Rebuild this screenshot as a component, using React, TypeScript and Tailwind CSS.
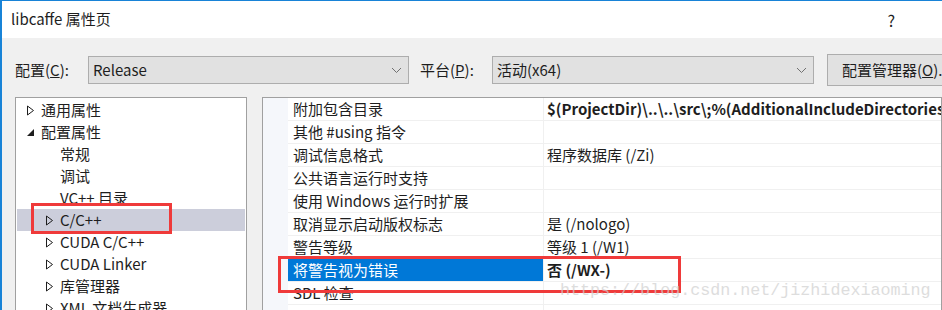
import React from "react"

const font = { fontFamily: '"Noto Sans CJK SC", "Noto Sans", sans-serif' }

type TreeItem = { label: string; level: number; icon?: "open" | "closed"; selected?: boolean }

const tree: TreeItem[] = [
    { label: "通用属性", level: 0, icon: "closed" },
    { label: "配置属性", level: 0, icon: "open" },
    { label: "常规", level: 1 },
    { label: "调试", level: 1 },
    { label: "VC++ 目录", level: 1 },
    { label: "C/C++", level: 1, icon: "closed", selected: true },
    { label: "CUDA C/C++", level: 1, icon: "closed" },
    { label: "CUDA Linker", level: 1, icon: "closed" },
    { label: "库管理器", level: 1, icon: "closed" },
    { label: "XML 文档生成器", level: 1, icon: "closed" },
]

type Prop = { name: string; value?: string; bold?: boolean; selected?: boolean }

const props: Prop[] = [
    { name: "附加包含目录", value: "$(ProjectDir)\\..\\..\\src\\;%(AdditionalIncludeDirectories)", bold: true },
    { name: "其他 #using 指令" },
    { name: "调试信息格式", value: "程序数据库 (/Zi)" },
    { name: "公共语言运行时支持" },
    { name: "使用 Windows 运行时扩展" },
    { name: "取消显示启动版权标志", value: "是 (/nologo)" },
    { name: "警告等级", value: "等级 1 (/W1)" },
    { name: "将警告视为错误", value: "否 (/WX-)", bold: true, selected: true },
    { name: "SDL 检查" },
    { name: "" },
]

function Chevron() {
    return (
        <svg width="11" height="7" viewBox="0 0 11 7" className="shrink-0">
            <path d="M1 1 L5.5 5.5 L10 1" fill="none" stroke="#707070" strokeWidth="1" />
        </svg>
    )
}

function Arrow({ kind }: { kind: "open" | "closed" }) {
    if (kind === "open") {
        return (
            <svg width="9" height="9" viewBox="0 0 9 9">
                <path d="M8 1 L8 8 L1 8 Z" fill="#1e1e1e" />
            </svg>
        )
    }
    return (
        <svg width="9" height="11" viewBox="0 0 9 11">
            <path d="M1.5 1 L7.5 5.5 L1.5 10 Z" fill="none" stroke="#1e1e1e" strokeWidth="1" />
        </svg>
    )
}

function Select({ value, width }: { value: string; width: string }) {
    return (
        <div className={`${width} shrink-0 h-[28px] flex items-center justify-between border border-[#adadad] bg-[#e1e1e1] pl-[4px] pr-[6px] text-[15px] text-[#1e1e1e]`}>
            <span>{value}</span>
            <Chevron />
        </div>
    )
}

export default function App() {
    return (
        <div className="relative w-[942px] h-[310px] overflow-hidden border-t border-l-2 border-[#1883d7] bg-[#f0f0f0] text-[#1e1e1e]" style={font}>
            <div className="h-[37px] bg-white flex items-center justify-between pl-[9px] pr-[47px] text-[15px]">
                <span>libcaffe 属性页</span>
                <span className="text-[16px]">?</span>
            </div>

            <div className="flex items-center mt-[16px] pl-[13px] text-[15px] whitespace-nowrap">
                <span className="w-[73px] shrink-0">
                    配置(<span className="underline">C</span>):
                </span>
                <Select value="Release" width="w-[321px]" />
                <span className="ml-[11px] w-[72px] shrink-0">
                    平台(<span className="underline">P</span>):
                </span>
                <Select value="活动(x64)" width="w-[322px]" />
                <div className="ml-[13px] h-[32px] w-[140px] shrink-0 flex items-center border border-[#adadad] bg-[#e1e1e1] pl-[14px]">
                    配置管理器(<span className="underline">O</span>)...
                </div>
            </div>

            <div className="flex mt-[11px] pl-[13px] gap-[15px]">
                <div className="w-[232px] h-[220px] shrink-0 border border-[#a0a0a0] bg-white pt-[1px] px-[1px]">
                    {tree.map((t) => (
                        <div
                            key={t.label}
                            className={`h-[22px] flex items-center text-[15px] ${t.selected ? "bg-[#cccedb]" : ""}`}
                            style={{ paddingLeft: t.level === 0 ? 9 : 28 }}
                        >
                            <span className="w-[15px] flex items-center">{t.icon && <Arrow kind={t.icon} />}</span>
                            <span>{t.label}</span>
                        </div>
                    ))}
                </div>

                <div className="flex-1 h-[220px] border border-[#a0a0a0] bg-white flex overflow-hidden">
                    <div className="w-[25px] shrink-0 bg-[#f5f7fb]" />
                    <div className="flex-1">
                        {props.map((p, i) => (
                            <div key={i} className="h-[23px] flex border-b border-[#f0f0f0] text-[15px] whitespace-nowrap">
                                <div
                                    className={`w-[256px] shrink-0 pl-[5px] flex items-center border-r border-[#f0f0f0] ${p.selected ? "bg-[#0078d7] text-white" : ""}`}
                                >
                                    {p.name}
                                </div>
                                <div className={`flex-1 pl-[3px] flex items-center overflow-hidden ${p.bold ? "font-bold" : ""}`}>
                                    {p.value}
                                </div>
                            </div>
                        ))}
                    </div>
                </div>
            </div>

            <div className="absolute left-[29px] top-[202px] w-[141px] h-[31px] border-[3px] border-[#ef3a3a]" />
            <div className="absolute left-[276px] top-[255px] w-[403px] h-[37px] border-[3px] border-[#ef3a3a]" />

            <div
                className="absolute left-[558px] top-[277px] text-[16.7px] text-[#d0d0d0] opacity-70 whitespace-nowrap"
                style={{ fontFamily: '"Liberation Mono", monospace' }}
            >
                https://blog.csdn.net/jizhidexiaoming
            </div>
        </div>
    )
}
